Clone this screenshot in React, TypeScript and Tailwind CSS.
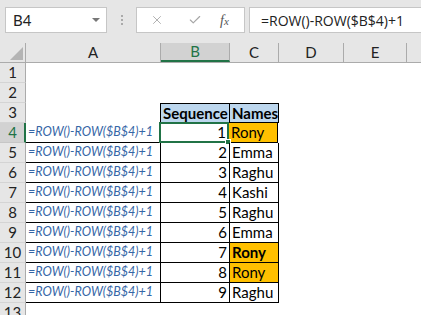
import { X, Check } from 'lucide-react'

const cols = [
  { key: 'A', w: 'w-[135px]' },
  { key: 'B', w: 'w-[69px]' },
  { key: 'C', w: 'w-[49px]' },
  { key: 'D', w: 'w-[65px]' },
  { key: 'E', w: 'w-[63px]' },
]

const data = [
  { n: 1, name: 'Rony', hi: true, bold: false },
  { n: 2, name: 'Emma', hi: false, bold: false },
  { n: 3, name: 'Raghu', hi: false, bold: false },
  { n: 4, name: 'Kashi', hi: false, bold: false },
  { n: 5, name: 'Raghu', hi: false, bold: false },
  { n: 6, name: 'Emma', hi: false, bold: false },
  { n: 7, name: 'Rony', hi: true, bold: true },
  { n: 8, name: 'Rony', hi: true, bold: false },
  { n: 9, name: 'Raghu', hi: false, bold: false },
]

const font = { fontFamily: 'Lato, "Liberation Sans", sans-serif' }

function RowHead({ n, active }: { n: number; active?: boolean }) {
  return (
    <div
      className={
        'flex h-full w-[26px] shrink-0 items-center justify-center border-b text-[15px] leading-none ' +
        (active
          ? 'border-b-[#c6c6c6] border-r-2 border-r-[#217346] bg-[#d2d2d2] pl-[1px] text-[#217346]'
          : 'border-r border-b-[#d4d4d4] border-r-[#ababab] bg-[#e6e6e6] text-[#222]')
      }
    >
      {n}
    </div>
  )
}

export default function App() {
  return (
    <div className="h-[315px] w-[421px] overflow-hidden bg-white" style={font}>
      {/* formula bar */}
      <div className="flex h-[43px] items-start bg-[#e6e6e6] pt-[7px]">
        <div className="ml-[5px] flex h-[26px] w-[102px] items-center justify-between border border-[#c6c6c6] bg-white pl-[7px] pr-[6px] text-[15px] text-[#222]">
          <span>B4</span>
          <span className="h-0 w-0 border-x-[4px] border-t-[4px] border-x-transparent border-t-[#777]" />
        </div>
        <div className="ml-[14px] mr-[13px] flex h-[26px] flex-col items-center justify-center gap-[2px]">
          <span className="h-[2px] w-[2px] bg-[#aaa]" />
          <span className="h-[2px] w-[2px] bg-[#aaa]" />
          <span className="h-[2px] w-[2px] bg-[#aaa]" />
        </div>
        <div className="flex h-[26px] w-[109px] items-center border border-[#c6c6c6] bg-white">
          <X className="ml-[13px] h-[14px] w-[14px] text-[#a6a6a6]" strokeWidth={1.5} />
          <Check className="ml-[24px] h-[14px] w-[14px] text-[#a6a6a6]" strokeWidth={2} />
          <span
            className="ml-[18px] text-[14px] italic text-[#555]"
            style={{ fontFamily: '"Liberation Serif", serif' }}
          >
            f<span className="text-[11px]">x</span>
          </span>
        </div>
        <div
          className="ml-[4px] flex h-[26px] flex-1 items-center whitespace-nowrap border border-r-0 border-[#c6c6c6] bg-white pl-[11px] text-[#222]"
          style={{ fontFamily: '"Open Sans", sans-serif', fontSize: '14px' }}
        >
          =ROW()-ROW($B$4)+1
        </div>
      </div>

      {/* column headers */}
      <div className="flex h-[20px] border-b border-[#ababab] bg-[#e6e6e6]">
        <div className="relative w-[26px] shrink-0 border-r border-[#ababab]">
          <span className="absolute bottom-[2px] right-[2px] h-0 w-0 border-b-[13px] border-l-[13px] border-b-[#b4b4b4] border-l-transparent" />
        </div>
        {cols.map((c) => (
          <div
            key={c.key}
            className={
              c.w +
              ' flex shrink-0 items-center justify-center border-r text-[15px] ' +
              (c.key === 'B'
                ? 'border-b-2 border-r-[#ababab] border-b-[#217346] bg-[#d2d2d2] text-[#217346]'
                : 'border-[#ababab] text-[#222]')
            }
          >
            {c.key}
          </div>
        ))}
        <div className="flex-1" />
      </div>

      {/* rows 1-2 */}
      {[1, 2].map((r) => (
        <div key={r} className="flex h-[20px]">
          <RowHead n={r} />
          <div className="flex-1" />
        </div>
      ))}

      {/* row 3 - table header */}
      <div className="flex h-[20px]">
        <RowHead n={3} />
        <div className="w-[134px] shrink-0" />
        <div className="flex w-[70px] shrink-0 items-center whitespace-nowrap border border-black bg-[#bdd7ee] pl-[2px] text-[15px] font-bold text-black">
          Sequence
        </div>
        <div className="flex w-[49px] shrink-0 items-center border-y border-r border-black bg-[#bdd7ee] pl-[2px] text-[15px] font-bold text-black">
          Names
        </div>
      </div>

      {/* rows 4-12 */}
      {data.map((d, i) => (
        <div key={d.n} className="flex h-[20px]">
          <RowHead n={i + 4} active={i === 0} />
          <div
            className={
              'flex shrink-0 items-center overflow-hidden whitespace-nowrap border-b border-r border-black pl-[2px] text-[12.5px] italic text-[#3566a6] ' +
              (i === 0 ? 'w-[134px]' : 'w-[135px]')
            }
          >
            =ROW()-ROW($B$4)+1
          </div>
          <div className="relative flex w-[69px] shrink-0 items-center justify-end border-b border-r border-black pr-[2px] text-[15px] text-black">
            {d.n}
            {i === 0 && (
              <>
                <span className="pointer-events-none absolute -left-[1px] -top-[1px] h-[21px] w-[70px] border-2 border-[#217346]" />
                <span className="absolute -bottom-[3px] -right-[3px] h-[6px] w-[6px] border border-white bg-[#217346]" />
              </>
            )}
          </div>
          <div
            className={
              'flex w-[49px] shrink-0 items-center border-b border-r border-black pl-[2px] text-[15px] text-black ' +
              (d.hi ? 'bg-[#ffc000] ' : '') +
              (d.bold ? 'font-bold' : '')
            }
          >
            {d.name}
          </div>
        </div>
      ))}

      <div className="flex h-[20px]">
        <RowHead n={13} />
      </div>
    </div>
  )
}
